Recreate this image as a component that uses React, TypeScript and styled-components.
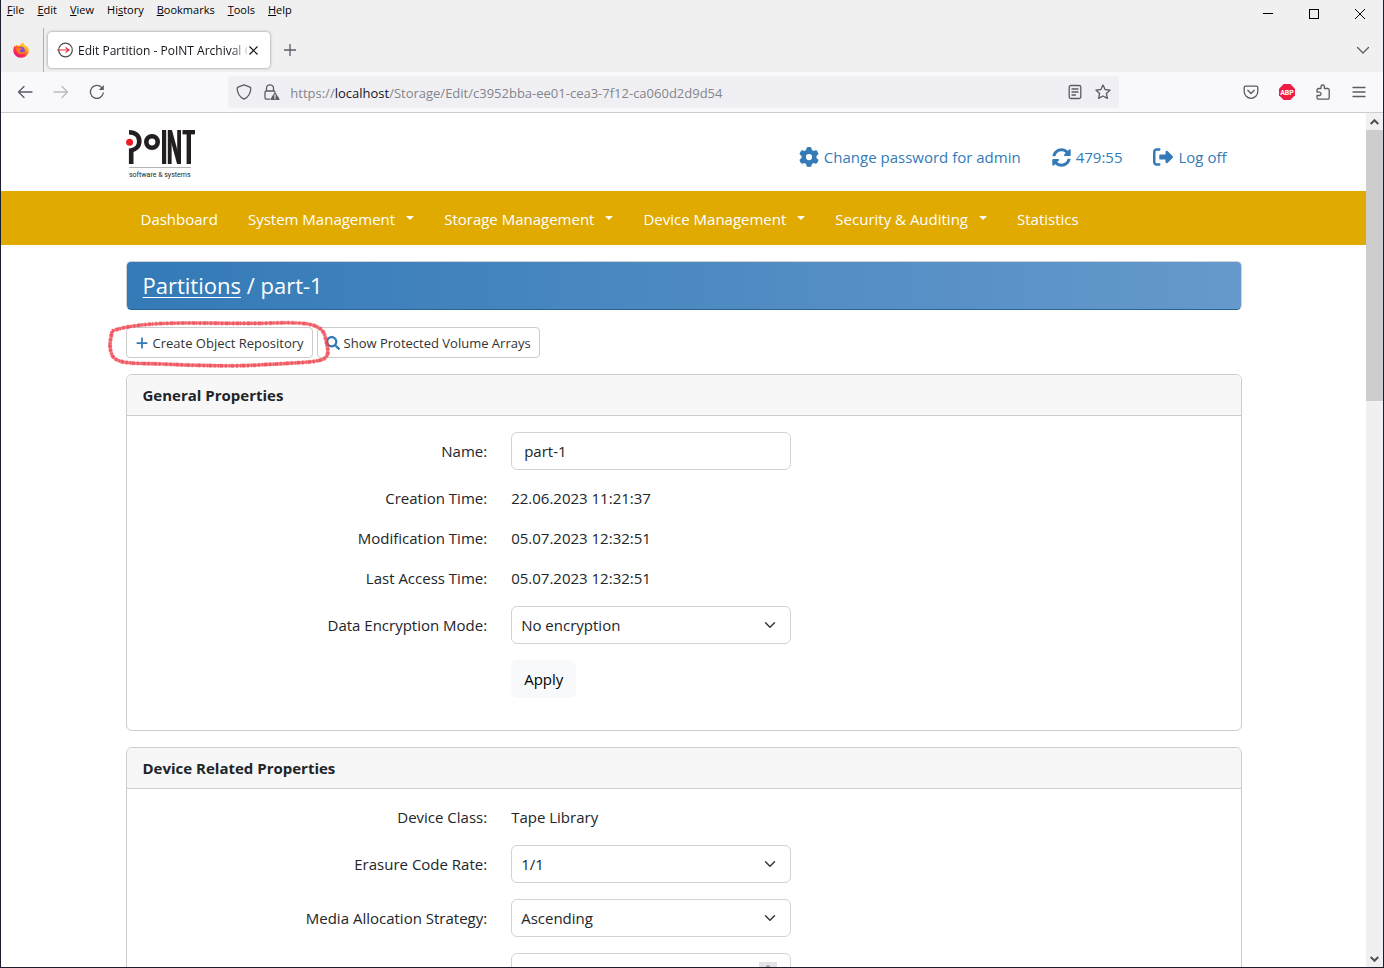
import React from "react";
import styled, { createGlobalStyle, css } from "styled-components";
import { FaGear, FaPlus, FaRightFromBracket } from "react-icons/fa6";
import { FaSearch, FaSyncAlt } from "react-icons/fa";

const GlobalStyle = createGlobalStyle`
  *, *::before, *::after { box-sizing: border-box; }
  body { margin: 0; background: #fff; }
  body, button, input, select {
    font-family: "Open Sans", "Noto Sans", sans-serif;
  }
`;

/* ---------- browser window ---------- */

const Window = styled.div`
  display: flex;
  flex-direction: column;
  height: 100vh;
  border: solid #1c1f2b;
  border-width: 0 1px 1px;
  overflow: hidden;
  background: #fff;
`;

const MenuBar = styled.div`
  display: flex;
  justify-content: space-between;
  height: 28px;
  background: #f0f0f0;
`;

const Menus = styled.nav`
  display: flex;
  gap: 13px;
  padding-left: 6px;
`;

const MenuButton = styled.button`
  height: 20px;
  padding: 0;
  border: 0;
  background: none;
  font-size: 11px;
  line-height: 20px;
  color: #000;
`;

const WindowButtons = styled.div`
  display: flex;
`;

const WindowButton = styled.button`
  display: flex;
  align-items: center;
  justify-content: center;
  width: 46px;
  height: 28px;
  padding: 0;
  border: 0;
  background: none;
`;

const TabStrip = styled.div`
  display: flex;
  align-items: center;
  height: 44px;
  background: #f0f0f0;
`;

const PinnedArea = styled.div`
  display: flex;
  align-items: center;
  justify-content: center;
  width: 43px;
  height: 44px;
  padding-right: 2px;
  border-right: 1px solid #b0b0b3;
`;

const Tab = styled.div`
  display: flex;
  align-items: center;
  width: 222px;
  height: 36px;
  margin-left: 4px;
  padding: 0 11px 0 9px;
  border-radius: 4px;
  background: #fff;
  box-shadow: 0 0 3px rgba(0, 0, 0, 0.45);
`;

const TabTitle = styled.span`
  flex: 1;
  margin-left: 5px;
  padding-top: 2px;
  overflow: hidden;
  font-size: 12px;
  line-height: 20px;
  white-space: nowrap;
  color: #15141a;
  mask-image: linear-gradient(to right, #000 90%, rgba(0, 0, 0, 0.2) 100%);
`;

const IconButton = styled.button<{ $width?: number }>`
  display: flex;
  align-items: center;
  justify-content: center;
  flex: none;
  width: ${(p) => p.$width ?? 36}px;
  height: 32px;
  padding: 0;
  border: 0;
  background: none;
  color: #5b5b66;

  &:disabled {
    opacity: 0.4;
  }
`;

const Push = styled.div`
  flex: 1;
`;

const Toolbar = styled.div`
  display: flex;
  align-items: center;
  flex: none;
  height: 41px;
  padding: 0 6px;
  border-bottom: 1px solid #ccccd0;
  background: #f9f9fb;
`;

const ToolGroup = styled.div`
  display: flex;
  flex: 6 1 0;
`;

const EndTools = styled(ToolGroup)`
  flex-grow: 7;
  justify-content: flex-end;
`;

const AddressBar = styled.div`
  display: flex;
  align-items: center;
  width: 65%;
  height: 32px;
  padding: 0 2px;
  border-radius: 4px;
  background: #f0f0f4;
`;

const Address = styled.div`
  flex: 1;
  padding: 2px 0 0 4px;
  font-size: 13px;
  line-height: 20px;
  color: #84848a;
  white-space: nowrap;
  overflow: hidden;

  b {
    font-weight: 400;
    color: #15141a;
  }
`;

const Viewport = styled.div`
  display: flex;
  flex: 1;
  min-height: 0;
`;

const Page = styled.div`
  flex: 1;
  overflow: hidden;
  font-size: 15px;
  line-height: 24px;
  color: #212529;
`;

const Scrollbar = styled.div`
  display: flex;
  flex-direction: column;
  width: 17px;
  background: #f0f0f0;
`;

const ScrollArrow = styled.button`
  display: flex;
  align-items: center;
  justify-content: center;
  height: 17px;
  padding: 0;
  border: 0;
  background: none;
`;

const ScrollTrack = styled.div`
  flex: 1;
`;

const ScrollThumb = styled.div`
  height: 33%;
  background: #cdcdcd;
`;

/* ---------- web page ---------- */

const Container = styled.div`
  max-width: 1140px;
  margin: 0 auto;
  padding: 0 12px;
`;

const Header = styled(Container).attrs({ as: "header" })`
  display: flex;
  align-items: center;
  justify-content: space-between;
  height: 78px;
  padding-top: 8px;
`;

const UserLinks = styled.div`
  display: flex;
  gap: 31px;
  padding: 2px 15px 0 0;
`;

const UserLink = styled.a`
  display: flex;
  align-items: center;
  gap: 5px;
  color: #337ab7;
  text-decoration: none;
`;

const NavBar = styled.nav`
  background: #e0aa00;
`;

const NavList = styled(Container)`
  display: flex;
  align-items: center;
  gap: 30px;
  height: 54px;
  padding: 2px 27px 0;
`;

const NavLink = styled.a<{ $menu?: boolean }>`
  color: #fff;
  text-decoration: none;
  white-space: nowrap;

  ${(p) =>
    p.$menu &&
    css`
      &::after {
        content: "";
        display: inline-block;
        margin-left: 11px;
        vertical-align: 5px;
        border: 4px solid transparent;
        border-top-color: #fff;
        border-bottom: 0;
      }
    `}
`;

const TitleBar = styled.h1`
  height: 49px;
  margin: 16px 0;
  padding: 0 16px;
  border: 1px solid #d0d4d8;
  border-bottom-color: #2a6496;
  border-radius: 5px;
  background: linear-gradient(to right, #337ab7, #6699cc);
  color: #fff;
  font-size: 22px;
  font-weight: 400;
  line-height: 47px;

  a {
    color: inherit;
    text-underline-offset: 3px;
    text-decoration-thickness: 1px;
  }
`;

const Actions = styled.div`
  position: relative;
  display: flex;
  gap: 4px;
  margin: 17px 0 16px;
`;

const ActionButton = styled.button`
  display: flex;
  align-items: center;
  gap: 4px;
  height: 31px;
  padding: 1px 8px 0;
  border: 1px solid #ccc;
  border-radius: 4px;
  background: #fff;
  color: #333;
  font-size: 13px;
  line-height: 21px;

  svg {
    color: #337ab7;
  }
`;

const Marker = styled.svg`
  position: absolute;
  left: -18px;
  top: -9px;
  pointer-events: none;
`;

const Card = styled.section`
  margin-bottom: 16px;
  border: 1px solid #ccc;
  border-radius: 6px;
  overflow: hidden;
`;

const CardTitle = styled.h2`
  margin: 0;
  padding: 8px 16px;
  border-bottom: 1px solid #ccc;
  background: #f7f7f7;
  font-size: 15px;
  font-weight: 700;
  line-height: 24px;
`;

const CardBody = styled.div`
  padding: 16px 4px;
`;

const Row = styled.div`
  display: flex;
  align-items: center;
  margin-bottom: 16px;
`;

const LabelCell = styled.div`
  width: 33.3333%;
  padding: 0 12px;
  text-align: right;
  white-space: nowrap;
`;

const ValueCell = styled.div`
  position: relative;
  width: 304px;
  padding: 0 12px;
`;

const control = css`
  display: block;
  width: 100%;
  height: 38px;
  border: 1px solid #ced4da;
  border-radius: 6px;
  background: #fff;
  color: #212529;
  font-size: 15px;
  line-height: 24px;
`;

const TextInput = styled.input`
  ${control}
  padding: 0 12px;

  &::-webkit-inner-spin-button {
    appearance: none;
  }
`;

const Select = styled.select`
  ${control}
  padding: 0 36px 0 9px;
  appearance: none;
`;

const SelectArrow = styled.svg`
  position: absolute;
  right: 27px;
  top: 13px;
  pointer-events: none;
`;

const Stepper = styled.span`
  position: absolute;
  right: 26px;
  top: 9px;
  display: flex;
  justify-content: center;
  width: 18px;
  height: 20px;
  padding-top: 2px;
  background: #e4e4e8;
`;

const ApplyButton = styled.button`
  height: 38px;
  padding: 0 13px;
  border: 0;
  border-radius: 6px;
  background: #f8f9fa;
  color: #000;
  font-size: 15px;
  line-height: 24px;
`;

/* ---------- drawings ---------- */

const stroke = {
  fill: "none",
  stroke: "currentColor",
  strokeWidth: 1.3,
  strokeLinecap: "round" as const,
  strokeLinejoin: "round" as const,
};

const Icon = ({ d, size = 16, children }: { d?: string; size?: number; children?: React.ReactNode }) => (
  <svg width={size} height={size} viewBox="0 0 16 16" {...stroke} aria-hidden="true">
    {d && <path d={d} />}
    {children}
  </svg>
);

const FirefoxIcon = () => (
  <svg width="16" height="16" viewBox="0 0 16 16" aria-label="Firefox">
    <defs>
      <linearGradient id="fxBody" x1="0.85" y1="0.1" x2="0.2" y2="0.95">
        <stop offset="0" stopColor="#fff44f" />
        <stop offset="0.35" stopColor="#ff980e" />
        <stop offset="0.65" stopColor="#ff3647" />
        <stop offset="1" stopColor="#e31587" />
      </linearGradient>
      <radialGradient id="fxGlobe" cx="0.6" cy="0.3" r="0.8">
        <stop offset="0" stopColor="#9059ff" />
        <stop offset="1" stopColor="#5b2fc0" />
      </radialGradient>
    </defs>
    <path d="M10 0c.6.800 1 1.800 1.300 2.700C13.900 3.800 15.800 5.600 15.800 8.600c0 4-3.400 7.200-7.700 7.200C3.700 15.800.3 12.600.3 8.300c0-2 .7-3.700 1.600-4.800l.3 1.200c.5-.9 1-1.500 1.700-2l.2 1.300C5 3.700 6 3.600 6.900 3.700 7.500 2.300 8.700 1.200 10 0z" fill="url(#fxBody)" />
    <circle cx="8.300" cy="8.400" r="3.400" fill="url(#fxGlobe)" />
    <path d="M3.200 6.200c1.200-.8 2.600-.7 3.500-.1.600.4 1.500.4 2.100.6-.2.900-1.200 1.200-1.700 1.500-.3 1.300.7 2.200 1.800 2.100 1.200 0 1.800-1 2.900-.4-.8 1.700-2.400 2.400-4.100 2.200-2.700-.2-4.500-2.700-4.500-5.900z" fill="#ff7a1f" />
  </svg>
);

const PointLogo = () => (
  <svg width="76" height="54" viewBox="0 0 76 54" role="img" aria-label="PoINT software & systems">
    <g fill="none" stroke="#231f20">
      <path d="M3 3.200c6.500 0 10.300 3.800 10.300 9s-4 8.500-8.100 9.200V35" strokeWidth="4.600" />
      <circle cx="26" cy="13" r="5.700" strokeWidth="4.600" />
    </g>
    <g fill="#231f20" stroke="#231f20">
      <rect x="36" y="1" width="4.200" height="34" stroke="none" />
      <rect x="41.800" y="1" width="3.800" height="34" stroke="none" />
      <rect x="51.200" y="1" width="3.800" height="34" stroke="none" />
      <line x1="44" y1="1.500" x2="53" y2="34.500" strokeWidth="4" />
      <rect x="56.500" y="1" width="12.500" height="4.400" stroke="none" />
      <rect x="60.600" y="1" width="4.400" height="34" stroke="none" />
    </g>
    <circle cx="3.600" cy="13.200" r="3.500" fill="#ed1c24" />
    <rect x="3" y="38" width="62" height="1" fill="#b5b5b5" />
    <text x="3" y="48" fontFamily="Roboto, sans-serif" fontSize="7" fill="#231f20">
      software &amp; systems
    </text>
  </svg>
);

const outline =
  "M4 13C20 7 50 5 78 5S135 6 165 5S214 5 217 18S223 39 213 42S180 45 150 47S80 47 55 46S8 47 4 37S3 22 4 13";

const HighlightMarker = () => (
  <Marker width="226" height="54" viewBox="0 0 226 54" fill="none" aria-hidden="true">
    <path d={outline} stroke="#ee3b46" strokeOpacity="0.7" strokeWidth="3.200" />
    <path d={outline} stroke="#ee3b46" strokeOpacity="0.5" strokeWidth="4.200" strokeDasharray="2 2 3 1 1 2" />
  </Marker>
);

/* ---------- composed parts ---------- */

const menus: [string, string, string][] = [
  ["", "F", "ile"],
  ["", "E", "dit"],
  ["", "V", "iew"],
  ["Hi", "s", "tory"],
  ["", "B", "ookmarks"],
  ["", "T", "ools"],
  ["", "H", "elp"],
];

const navItems = [
  { label: "Dashboard" },
  { label: "System Management", menu: true },
  { label: "Storage Management", menu: true },
  { label: "Device Management", menu: true },
  { label: "Security & Auditing", menu: true },
  { label: "Statistics" },
];

const TextRow = ({ label, value }: { label: string; value: string }) => (
  <Row>
    <LabelCell>{label}</LabelCell>
    <ValueCell>{value}</ValueCell>
  </Row>
);

const SelectRow = ({ id, label, value }: { id: string; label: string; value: string }) => (
  <Row>
    <LabelCell>
      <label htmlFor={id}>{label}</label>
    </LabelCell>
    <ValueCell>
      <Select id={id} defaultValue={value}>
        <option>{value}</option>
      </Select>
      <SelectArrow width="12" height="12" viewBox="0 0 16 16" fill="none" stroke="#343a40" strokeWidth="2" strokeLinecap="round" strokeLinejoin="round">
        <path d="m2 5 6 6 6-6" />
      </SelectArrow>
    </ValueCell>
  </Row>
);

const BrowserChrome = () => (
  <>
    <MenuBar>
      <Menus>
        {menus.map(([before, key, after]) => (
          <MenuButton key={before + key + after}>
            {before}
            <u>{key}</u>
            {after}
          </MenuButton>
        ))}
      </Menus>
      <WindowButtons>
        <WindowButton aria-label="Minimize">
          <svg width="10" height="10"><path d="M0 4.500h10" stroke="#000" /></svg>
        </WindowButton>
        <WindowButton aria-label="Maximize">
          <svg width="10" height="10"><rect x="0.500" y="0.500" width="9" height="9" fill="none" stroke="#000" /></svg>
        </WindowButton>
        <WindowButton aria-label="Close">
          <svg width="10" height="10"><path d="M0 0l10 10M10 0L0 10" stroke="#000" /></svg>
        </WindowButton>
      </WindowButtons>
    </MenuBar>
    <TabStrip>
      <PinnedArea>
        <FirefoxIcon />
      </PinnedArea>
      <Tab>
        <svg width="16" height="16" viewBox="0 0 16 16" fill="none" aria-hidden="true">
          <circle cx="8.500" cy="8" r="6.800" stroke="#4a4a4f" strokeWidth="1.200" />
          <path d="M0 8h12M8.500 5.500L12 8l-3.500 2.500" stroke="#e0333c" strokeWidth="1.200" />
        </svg>
        <TabTitle>Edit Partition - PoINT Archival Gateway</TabTitle>
        <IconButton $width={12} aria-label="Close tab">
          <svg width="9" height="9" stroke="#15141a" strokeWidth="1.200"><path d="M.5.5l8 8M8.500.5l-8 8" /></svg>
        </IconButton>
      </Tab>
      <IconButton $width={40} aria-label="New tab">
        <svg width="12" height="12" stroke="#5b5b66" strokeWidth="1.300"><path d="M6 0v12M0 6h12" /></svg>
      </IconButton>
      <Push />
      <IconButton $width={40} aria-label="List all tabs">
        <Icon d="M2.500 5.500L8 11l5.500-5.500" />
      </IconButton>
    </TabStrip>
    <Toolbar>
      <ToolGroup>
        <IconButton aria-label="Back">
          <Icon d="M15 8H1.500M7 2.500L1.500 8 7 13.500" />
        </IconButton>
        <IconButton aria-label="Forward" disabled>
          <Icon d="M1 8h13.500M9 2.500L14.500 8 9 13.500" />
        </IconButton>
        <IconButton aria-label="Reload">
          <Icon d="M14.300 9A6.500 6.500 0 1 1 12.800 3.600">
            <path d="M14.800 1v5h-5z" fill="currentColor" stroke="none" />
          </Icon>
        </IconButton>
      </ToolGroup>
      <AddressBar>
        <IconButton $width={28} aria-label="Tracking protection">
          <Icon d="M8 .8l6 2.300c.7.300.8.800.8 1.400-.2 4.600-2.600 8.600-6.800 10.700C3.800 13.100 1.400 9.100 1.200 4.500c0-.6.1-1.100.8-1.400z" />
        </IconButton>
        <IconButton $width={28} aria-label="Connection not secure">
          <Icon d="M5.500 15.200H2.500a1.500 1.500 0 0 1-1.500-1.500V8.500A1.500 1.500 0 0 1 2.500 7h7A1.500 1.500 0 0 1 11 8M2.500 7V4.300a3.500 3.500 0 0 1 7 0V7">
            <path d="M11 9L15 15.300H7z" fill="currentColor" />
            <path d="M11 11v2M11 14.500v.2" stroke="#f0f0f4" />
          </Icon>
        </IconButton>
        <Address role="textbox" aria-label="Address">
          https://<b>localhost</b>/Storage/Edit/c3952bba-ee01-cea3-7f12-ca060d2d9d54
        </Address>
        <IconButton $width={28} aria-label="Reader view">
          <Icon d="M4 1.500h8a1.800 1.800 0 0 1 1.800 1.800v9.400A1.800 1.800 0 0 1 12 14.500H4a1.800 1.800 0 0 1-1.800-1.800V3.300A1.800 1.800 0 0 1 4 1.500zM5 5h6M5 8h6M5 11h3.500" />
        </IconButton>
        <IconButton $width={28} aria-label="Bookmark this page">
          <Icon d="M8 1l2.100 4.500 5 .6-3.700 3.400 1 4.900L8 12l-4.400 2.400 1-4.900L.9 6.100l5-.6z" />
        </IconButton>
      </AddressBar>
      <EndTools>
        <IconButton aria-label="Save to Pocket">
          <Icon d="M2.500 2.200h11a1.300 1.300 0 0 1 1.300 1.300V7.500a6.800 6.800 0 0 1-13.600 0V3.500A1.300 1.300 0 0 1 2.500 2.200zM4.800 6.300L8 9.500l3.200-3.200" />
        </IconButton>
        <IconButton aria-label="Adblock Plus">
          <svg width="16" height="16" viewBox="0 0 16 16" aria-hidden="true">
            <path d="M4.700 0h6.600L16 4.700v6.600L11.300 16H4.700L0 11.300V4.700z" fill="#ed1e45" />
            <text x="8" y="10.500" textAnchor="middle" fontFamily="Roboto, sans-serif" fontWeight="700" fontSize="7" fill="#fff">
              ABP
            </text>
          </svg>
        </IconButton>
        <IconButton aria-label="Extensions">
          <Icon d="M3.500 4.500H6V2.700a1.700 1.700 0 0 1 3.400 0V4.500h3.300a1.500 1.500 0 0 1 1.500 1.500v7.700a1.500 1.500 0 0 1-1.500 1.500H3.500a1.500 1.500 0 0 1-1.500-1.500v-2.200h2.300a1.700 1.700 0 0 0 0-3.400H2V6A1.500 1.500 0 0 1 3.500 4.500z" />
        </IconButton>
        <IconButton aria-label="Application menu">
          <Icon d="M2 3.500h12M2 8h12M2 12.500h12" />
        </IconButton>
      </EndTools>
    </Toolbar>
  </>
);

export default function App() {
  return (
    <>
      <GlobalStyle />
      <Window>
        <BrowserChrome />
        <Viewport>
          <Page>
            <Header>
              <PointLogo />
              <UserLinks>
                <UserLink href="#password">
                  <FaGear size={20} />
                  Change password for admin
                </UserLink>
                <UserLink href="#session">
                  <FaSyncAlt size={19} />
                  479:55
                </UserLink>
                <UserLink href="#logoff">
                  <FaRightFromBracket size={20} />
                  Log off
                </UserLink>
              </UserLinks>
            </Header>
            <NavBar>
              <NavList>
                {navItems.map((item) => (
                  <NavLink key={item.label} href="#nav" $menu={item.menu}>
                    {item.label}
                  </NavLink>
                ))}
              </NavList>
            </NavBar>
            <Container as="main">
              <TitleBar>
                <a href="#partitions">Partitions</a> / part-1
              </TitleBar>
              <Actions>
                <ActionButton>
                  <FaPlus size={14} />
                  Create Object Repository
                </ActionButton>
                <ActionButton>
                  <FaSearch size={14} />
                  Show Protected Volume Arrays
                </ActionButton>
                <HighlightMarker />
              </Actions>
              <Card>
                <CardTitle>General Properties</CardTitle>
                <CardBody>
                  <Row>
                    <LabelCell>
                      <label htmlFor="name">Name:</label>
                    </LabelCell>
                    <ValueCell>
                      <TextInput id="name" defaultValue="part-1" />
                    </ValueCell>
                  </Row>
                  <TextRow label="Creation Time:" value="22.06.2023 11:21:37" />
                  <TextRow label="Modification Time:" value="05.07.2023 12:32:51" />
                  <TextRow label="Last Access Time:" value="05.07.2023 12:32:51" />
                  <SelectRow id="encryption" label="Data Encryption Mode:" value="No encryption" />
                  <Row>
                    <LabelCell />
                    <ValueCell>
                      <ApplyButton>Apply</ApplyButton>
                    </ValueCell>
                  </Row>
                </CardBody>
              </Card>
              <Card>
                <CardTitle>Device Related Properties</CardTitle>
                <CardBody>
                  <TextRow label="Device Class:" value="Tape Library" />
                  <SelectRow id="rate" label="Erasure Code Rate:" value="1/1" />
                  <SelectRow id="strategy" label="Media Allocation Strategy:" value="Ascending" />
                  <Row>
                    <LabelCell>
                      <label htmlFor="threshold">Full Tape Allocation Threshold (Percent):</label>
                    </LabelCell>
                    <ValueCell>
                      <TextInput id="threshold" type="number" />
                      <Stepper>
                        <svg width="8" height="6" fill="none" stroke="#5b5b66"><path d="M1 4.500l3-3 3 3" /></svg>
                      </Stepper>
                    </ValueCell>
                  </Row>
                </CardBody>
              </Card>
            </Container>
          </Page>
          <Scrollbar>
            <ScrollArrow aria-label="Scroll up">
              <svg width="9" height="6" fill="none" stroke="#505050" strokeWidth="2"><path d="M.7 5l3.800-3.800L8.300 5" /></svg>
            </ScrollArrow>
            <ScrollTrack>
              <ScrollThumb />
            </ScrollTrack>
            <ScrollArrow aria-label="Scroll down">
              <svg width="9" height="6" fill="none" stroke="#505050" strokeWidth="2"><path d="M.7 1l3.800 3.800L8.300 1" /></svg>
            </ScrollArrow>
          </Scrollbar>
        </Viewport>
      </Window>
    </>
  );
}
